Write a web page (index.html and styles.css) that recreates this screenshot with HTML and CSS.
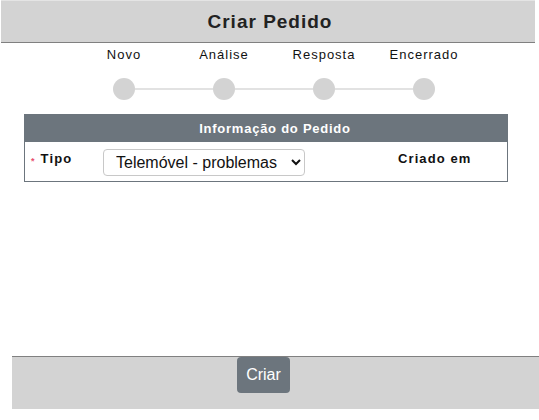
FILE: index.html
```html
<!DOCTYPE html>
<html lang="pt">
<head>
  <meta charset="UTF-8">
  <meta name="viewport" content="width=device-width, initial-scale=1.0">
  <title>Criar Pedido</title>
  <link rel="stylesheet" href="styles.css">
</head>
<body>

<div class="page">
  <header class="top-bar">
    <h1>Criar Pedido</h1>
  </header>

  <ol class="stepper">
    <li class="step"><span class="step-label">Novo</span><span class="step-dot"></span></li>
    <li class="step"><span class="step-label">Análise</span><span class="step-dot"></span></li>
    <li class="step"><span class="step-label">Resposta</span><span class="step-dot"></span></li>
    <li class="step"><span class="step-label">Encerrado</span><span class="step-dot"></span></li>
  </ol>

  <section class="panel">
    <div class="panel-title">Informação do Pedido</div>
    <div class="panel-body">
      <label class="field-label" for="tipo"><span class="required">*</span>Tipo</label>
      <select id="tipo" class="field-select">
        <option>Telemóvel - problemas</option>
        <option>Internet - problemas</option>
        <option>Faturação</option>
      </select>
      <span class="field-label created">Criado em</span>
    </div>
  </section>

  <footer class="bottom-bar">
    <button type="button" class="btn-create">Criar</button>
  </footer>
</div>

</body>
</html>
```

FILE: styles.css
```css
body {
  margin: 0;
  font-family: "Liberation Sans", Arial, sans-serif;
  color: #111;
  background-color: #fff;
}

.page {
  height: 420px;
  display: flex;
  flex-direction: column;
}

.top-bar {
  margin: 0 4px 0 1px;
  height: 41px;
  border-top: 1px solid #e4e4e4;
  border-bottom: 1px solid #808080;
  background-color: #d3d3d3;
  display: flex;
  align-items: center;
  justify-content: center;
}

.top-bar h1 {
  margin: 0 0 0 4px;
  font-size: 19px;
  font-weight: bold;
  letter-spacing: 1px;
  color: #222;
}

.stepper {
  list-style: none;
  margin: 4px 0 0 74px;
  padding: 0;
  display: grid;
  grid-template-columns: repeat(4, 100px);
}

.step {
  position: relative;
  display: flex;
  flex-direction: column;
  align-items: center;
}

.step-label {
  font-size: 13px;
  letter-spacing: 1px;
  line-height: 16px;
}

.step-dot {
  margin-top: 15px;
  width: 22px;
  height: 22px;
  border-radius: 50%;
  background-color: #d3d3d3;
  position: relative;
  z-index: 1;
}

.step + .step::before {
  content: "";
  position: absolute;
  left: -50px;
  right: 50px;
  top: 41px;
  height: 2px;
  background-color: #e2e2e2;
}

.panel {
  margin: 14px 0 0 24px;
  width: 484px;
  border: 1px solid #6c757d;
  box-sizing: border-box;
}

.panel-title {
  height: 27px;
  background-color: #6c757d;
  color: #fff;
  font-size: 13px;
  font-weight: bold;
  letter-spacing: 0.75px;
  display: flex;
  align-items: center;
  justify-content: center;
  padding-left: 18px;
}

.panel-body {
  height: 39px;
  display: flex;
  align-items: center;
}

.field-label {
  font-size: 13px;
  font-weight: bold;
  letter-spacing: 1.1px;
  align-self: flex-start;
  margin-top: 9px;
}

.panel-body > label {
  width: 72px;
  padding-left: 6px;
}

.required {
  color: #e8506e;
  font-size: 9px;
  margin-right: 5px;
  vertical-align: -1px;
}

.field-select {
  width: 202px;
  height: 27px;
  border: 1px solid #c8c8c8;
  border-radius: 4px;
  background-color: #fff;
  font-family: "Liberation Sans", Arial, sans-serif;
  font-size: 16px;
  color: #111;
  padding: 0 8px;
  margin-top: 1px;
}

.created {
  margin-left: 93px;
}

.bottom-bar {
  margin: auto 0 11px 12px;
  height: 52px;
  border-top: 1px solid #808080;
  background-color: #d3d3d3;
  display: flex;
  justify-content: center;
  align-items: flex-start;
  padding-right: 24px;
}

.btn-create {
  width: 53px;
  height: 36px;
  border: none;
  border-radius: 4px;
  background-color: #6c757d;
  color: #fff;
  font-family: "Liberation Sans", Arial, sans-serif;
  font-size: 16px;
  cursor: pointer;
}
```
